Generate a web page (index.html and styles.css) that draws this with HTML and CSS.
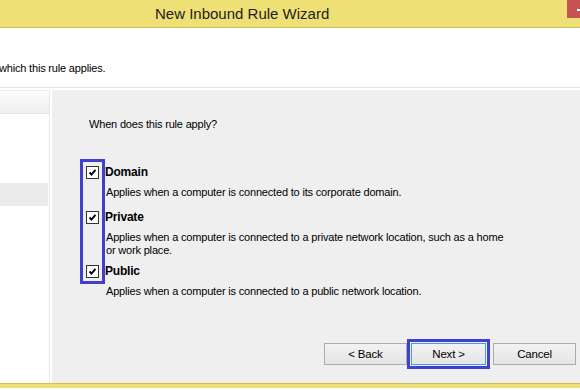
FILE: index.html
```html
<!DOCTYPE html>
<html lang="en">
<head>
  <meta charset="UTF-8" />
  <title>New Inbound Rule Wizard</title>
  <link rel="stylesheet" href="styles.css">
</head>
<body>
  <div class="titlebar">
    <span class="titulo">New Inbound Rule Wizard</span>
    <span class="fechar"></span>
  </div>

  <div class="cabecalho">
    <p>which this rule applies.</p>
  </div>

  <div class="principal">
    <div class="lateral">
      <div class="lateral-topo"></div>
      <div class="lateral-item"></div>
      <div class="lateral-item"></div>
      <div class="lateral-item"></div>
      <div class="lateral-item ativo"></div>
    </div>

    <div class="conteudo">
      <p class="pergunta">When does this rule apply?</p>

      <div class="opcoes">
        <div class="destaque"></div>

        <div class="opcao">
          <label class="opcao-titulo"><span class="caixa"><svg viewBox="0 0 13 13"><path d="M3 6.5 L5.3 9 L10 3.5" /></svg></span>Domain</label>
          <p class="opcao-desc">Applies when a computer is connected to its corporate domain.</p>
        </div>

        <div class="opcao opcao-longa">
          <label class="opcao-titulo"><span class="caixa"><svg viewBox="0 0 13 13"><path d="M3 6.5 L5.3 9 L10 3.5" /></svg></span>Private</label>
          <p class="opcao-desc">Applies when a computer is connected to a private network location, such as a home or work place.</p>
        </div>

        <div class="opcao">
          <label class="opcao-titulo"><span class="caixa"><svg viewBox="0 0 13 13"><path d="M3 6.5 L5.3 9 L10 3.5" /></svg></span>Public</label>
          <p class="opcao-desc">Applies when a computer is connected to a public network location.</p>
        </div>
      </div>

      <div class="botoes">
        <button>&lt; Back</button>
        <button class="foco">Next &gt;</button>
        <button class="cancelar">Cancel</button>
      </div>
    </div>
  </div>

  <div class="rodape"></div>
</body>
</html>
```

FILE: styles.css
```css
body {
  margin: 0;
  width: 580px;
  height: 390px;
  overflow: hidden;
  font-family: "Liberation Sans", Arial, sans-serif;
  font-size: 11px;
  letter-spacing: -0.18px;
  color: #000;
  background-color: #fff;
}

p {
  margin: 0;
}

.titlebar {
  position: relative;
  height: 27px;
  background-color: #efe075;
  border-bottom: 1px solid #c9bd5e;
  box-sizing: content-box;
}

.titulo {
  display: block;
  padding-left: 155px;
  line-height: 27px;
  font-size: 15px;
  letter-spacing: 0;
  color: #222;
}

.fechar {
  position: absolute;
  top: 0;
  right: 0;
  width: 13px;
  height: 18px;
  background-color: #c75252;
}

.fechar::after {
  content: "";
  position: absolute;
  right: 0;
  top: 9px;
  width: 3px;
  height: 2px;
  background-color: #fff;
}

.cabecalho {
  height: 60px;
  border-bottom: 1px solid #e4e4e4;
  box-sizing: border-box;
}

.cabecalho p {
  padding-top: 34px;
  margin-left: -1px;
}

.principal {
  display: flex;
  height: 295px;
  padding-top: 2px;
  box-sizing: border-box;
}

.lateral {
  width: 49px;
  border-right: 1px solid #e8e8e8;
  margin-right: 2px;
}

.lateral-topo {
  height: 22px;
  background: linear-gradient(#fdfdfd, #eeeeee);
  border-bottom: 1px solid #e6e6e6;
  border-top: 1px solid #ececec;
}

.lateral-item {
  height: 23px;
}

.lateral-item.ativo {
  background-color: #ececec;
  width: 48px;
}

.conteudo {
  flex: 1;
  background-color: #efefef;
  padding: 27px 0 0 37px;
  position: relative;
}

.pergunta {
  line-height: 15px;
}

.opcoes {
  position: relative;
  margin: 33px 0 0 -3px;
}

.destaque {
  position: absolute;
  left: -6px;
  top: -6px;
  width: 19px;
  height: 119px;
  border: 3px solid #4040cc;
}

.opcao {
  margin-bottom: 11px;
}

.opcao-longa {
  margin-bottom: 7px;
}

.opcao-titulo {
  display: flex;
  align-items: center;
  gap: 6px;
  font-weight: bold;
  font-size: 12px;
  letter-spacing: -0.2px;
  height: 14px;
}

.caixa {
  width: 11px;
  height: 11px;
  border: 1px solid #333;
  background-color: #fff;
  display: inline-block;
}

.caixa svg {
  display: block;
  width: 11px;
  height: 11px;
}

.caixa path {
  fill: none;
  stroke: #000;
  stroke-width: 2.2;
}

.opcao-desc {
  margin: 7px 0 0 20px;
  line-height: 13px;
  width: 405px;
}

.botoes {
  position: absolute;
  left: 272px;
  top: 253px;
  display: flex;
}

button {
  font-family: "Liberation Sans", Arial, sans-serif;
  font-size: 11.5px;
  letter-spacing: -0.2px;
  height: 22px;
  width: 83px;
  padding: 0;
  background: linear-gradient(#f2f2f2, #e5e5e5);
  border: 1px solid #acacac;
  color: #000;
}

.foco {
  width: 75px;
  margin-left: 4px;
  border-color: #3c9cff;
  outline: 3px solid #4040cc;
  outline-offset: 1px;
}

.cancelar {
  margin-left: 7px;
}

.rodape {
  height: 5px;
  background-color: #efe075;
  border-top: 1px solid #cdbf5e;
  box-sizing: border-box;
}
```
